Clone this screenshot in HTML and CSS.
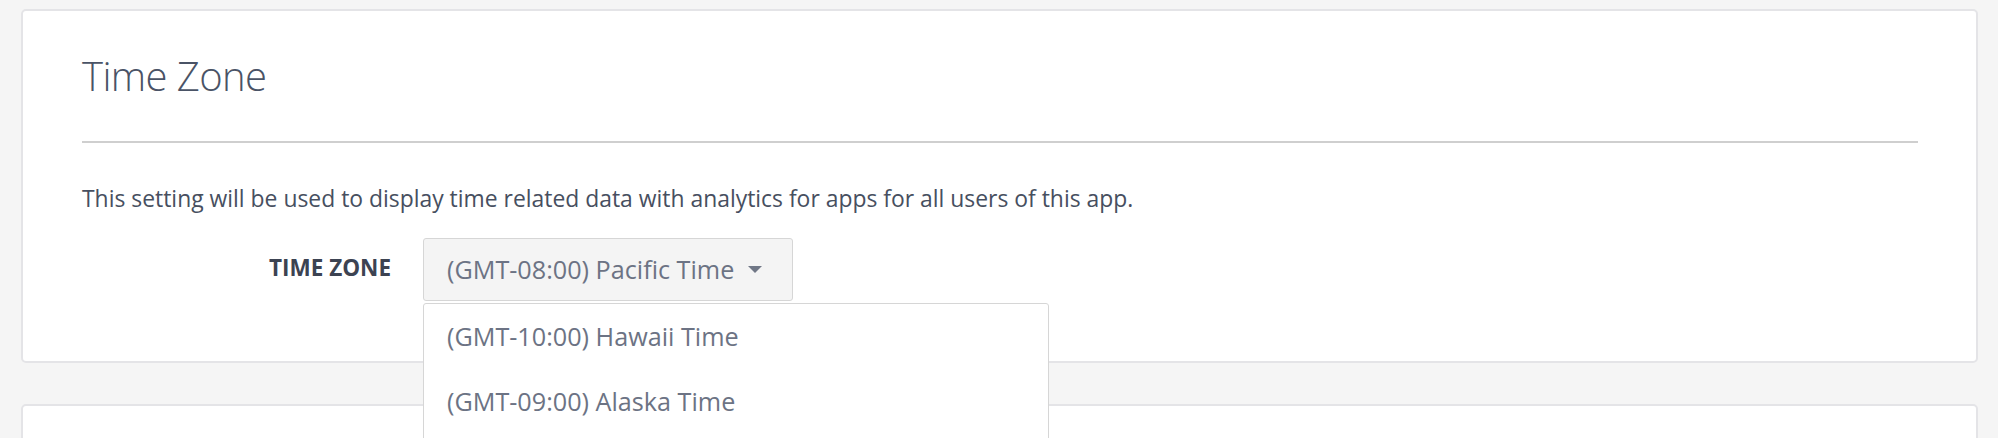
FILE: index.html
```html
<!DOCTYPE html>
<html lang="en">
<head>
<meta charset="utf-8">
<title>Time Zone</title>
<link rel="stylesheet" href="styles.css">
</head>
<body>
<div class="page">
  <section class="card">
    <h2 class="card-title">Time Zone</h2>
    <hr class="divider">
    <p class="description">This setting will be used to display time related data with analytics for apps for all users of this app.</p>
    <div class="form-row">
      <label class="form-label">TIME ZONE</label>
      <div class="select-wrap">
        <button class="select-btn" type="button">
          <span class="select-value">(GMT-08:00) Pacific Time</span>
          <svg class="caret" width="14" height="8" viewBox="0 0 14 8"><path d="M0 0 H14 L7 7 Z" fill="#707786"/></svg>
        </button>
        <ul class="select-menu">
          <li class="select-option">(GMT-10:00) Hawaii Time</li>
          <li class="select-option">(GMT-09:00) Alaska Time</li>
        </ul>
      </div>
    </div>
  </section>
  <section class="card card-next"></section>
</div>
</body>
</html>
```

FILE: styles.css
```css
html, body {
  margin: 0;
  padding: 0;
  background: #f5f5f5;
  font-family: "Open Sans", "Liberation Sans", sans-serif;
  overflow: hidden;
}

.page {
  padding: 9px 20px 0 21px;
  display: flex;
  flex-direction: column;
  gap: 41px;
}

.card {
  background: #ffffff;
  border: 2px solid #e4e4e7;
  border-radius: 5px;
  padding: 41px 58px 60px 59px;
}

.card-next {
  height: 200px;
  padding: 0;
}

.card-title {
  margin: 0;
  font-size: 40px;
  line-height: 48px;
  font-weight: 300;
  color: #4a5366;
  letter-spacing: -0.6px;
}

.divider {
  margin: 41px 0 0 0;
  border: 0;
  height: 2px;
  background: #cfcfcf;
}

.description {
  margin: 41px 0 0 0;
  font-size: 22.9px;
  line-height: 30px;
  color: #474f60;
}

.form-row {
  margin-top: 24px;
  display: flex;
  align-items: center;
  gap: 32px;
}

.form-label {
  width: 309px;
  padding-bottom: 4px;
  text-align: right;
  font-size: 22.5px;
  font-weight: 700;
  color: #3c4352;
}

.select-wrap {
  position: relative;
}

.select-btn {
  display: flex;
  align-items: center;
  gap: 14px;
  height: 63px;
  padding: 0 30px 0 23px;
  background: #f4f4f4;
  border: 1px solid #d6d6d6;
  border-radius: 3px;
  font-family: inherit;
  font-size: 25.2px;
  color: #6c7384;
  cursor: pointer;
}

.select-value {
  line-height: 61px;
}

.caret {
  display: block;
}

.select-menu {
  position: absolute;
  z-index: 10;
  left: 0;
  top: 65px;
  width: 626px;
  min-height: 180px;
  box-sizing: border-box;
  margin: 0;
  padding: 0;
  list-style: none;
  background: #ffffff;
  border: 1px solid #d6d6d6;
  border-radius: 3px;
}

.select-option {
  padding: 0 23px;
  font-size: 25.2px;
  line-height: 65px;
  color: #6c7384;
}
```
